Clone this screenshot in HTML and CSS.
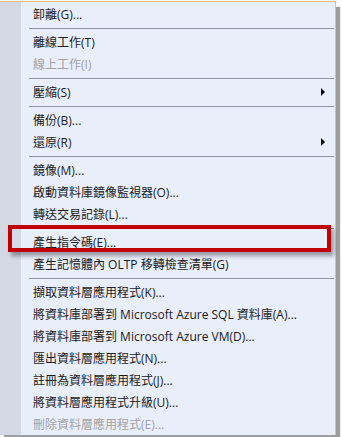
FILE: index.html
```html
<!DOCTYPE html>
<html lang="zh-Hant">
<head>
    <meta charset="UTF-8">
    <meta name="viewport" content="width=device-width, initial-scale=1.0">
    <title>工作 選單</title>
    <link rel="stylesheet" href="styles.css">
</head>
<body>

<div class="menu">
    <div class="menu-item">卸離(G)...</div>
    <div class="menu-sep"></div>
    <div class="menu-item">離線工作(T)</div>
    <div class="menu-item disabled">線上工作(I)</div>
    <div class="menu-sep"></div>
    <div class="menu-item">壓縮(S)<span class="arrow"></span></div>
    <div class="menu-sep"></div>
    <div class="menu-item">備份(B)...</div>
    <div class="menu-item">還原(R)<span class="arrow"></span></div>
    <div class="menu-sep"></div>
    <div class="menu-item">鏡像(M)...</div>
    <div class="menu-item">啟動資料庫鏡像監視器(O)...</div>
    <div class="menu-item">轉送交易記錄(L)...</div>
    <div class="menu-sep"></div>
    <div class="menu-item">產生指令碼(E)...</div>
    <div class="menu-item">產生記憶體內 OLTP 移轉檢查清單(G)</div>
    <div class="menu-sep"></div>
    <div class="menu-item">擷取資料層應用程式(K)...</div>
    <div class="menu-item">將資料庫部署到 Microsoft Azure SQL 資料庫(A)...</div>
    <div class="menu-item">將資料庫部署到 Microsoft Azure VM(D)...</div>
    <div class="menu-item">匯出資料層應用程式(N)...</div>
    <div class="menu-item">註冊為資料層應用程式(J)...</div>
    <div class="menu-item">將資料層應用程式升級(U)...</div>
    <div class="menu-item disabled">刪除資料層應用程式(E)...</div>

    <!-- highlight around the selected item -->
    <div class="highlight"></div>
</div>

</body>
</html>
```

FILE: styles.css
```css
body {
    margin: 0;
    padding: 0;
    background-color: #fff;
    font-family: "Open Sans", "Noto Sans CJK TC", sans-serif;
    font-size: 12px;
    color: #1b1b1b;
    height: 437px;
    overflow: hidden;
}

.menu {
    position: relative;
    width: 335px;
    margin-top: 1px;
    padding-top: 1px;
    border-top: 1px solid #e6c27c;
    border-right: 1px solid #e6c27c;
    background: linear-gradient(to right, #d4d9e5 21px, #e9eefb 21px);
    box-shadow: 4px 6px 1px rgba(0, 0, 0, 0.38);
}

.menu-item {
    display: flex;
    align-items: center;
    height: 22px;
    padding-left: 33px;
    white-space: nowrap;
}

.menu-item.disabled {
    color: #a3a3a3;
}

.menu-sep {
    height: 1px;
    margin: 3px 1px 2px 29px;
    background-color: #8e96a6;
}

.arrow {
    margin-left: auto;
    margin-right: 10px;
    width: 0;
    height: 0;
    border-left: 4px solid #000;
    border-top: 4px solid transparent;
    border-bottom: 4px solid transparent;
}

.highlight {
    position: absolute;
    left: 8px;
    top: 223px;
    width: 315px;
    height: 19px;
    border: 4px solid #c00000;
    box-shadow: 3px 4px 4px rgba(0, 0, 0, 0.35);
}
```
